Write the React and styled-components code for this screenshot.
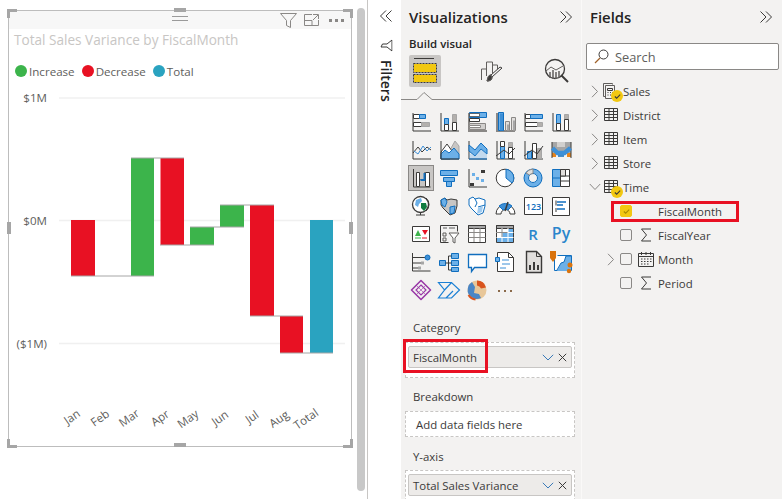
import React from 'react';
import styled, { createGlobalStyle } from 'styled-components';

const FONT = '"Open Sans", "Noto Sans", "Liberation Sans", sans-serif';
const D = '#3b3a39', B = '#106ebe', L = '#6cb0e8', G = '#a6a6a6', Y = '#f2c811', O = '#d9730d';

const Global = createGlobalStyle`
  html, body { margin: 0; padding: 0; width: 782px; height: 499px; overflow: hidden; background: #fff; }
  body { font-family: ${FONT}; }
  * { box-sizing: border-box; }
`;
const Page = styled.div`display: flex; width: 782px; height: 499px; overflow: hidden; background: #fff;`;
const Canvas = styled.div`
  width: 368px; height: 499px; flex: none; display: flex; align-items: flex-start;
  padding: 8px 0 0 8px; border-right: 1px solid #c8c6c4;
`;
const Card = styled.div`
  position: relative; width: 344px; height: 437px; margin-top: 2px; flex: none;
  border: 1px solid #bdbdbd; background: #fff; display: flex; flex-direction: column;
`;
const CardHeader = styled.div`
  height: 18px; flex: none; background: #f7f7f7; display: flex; align-items: center;
  justify-content: flex-end; gap: 7px; padding-right: 7px;
`;
const Grip = styled.div`
  position: absolute; left: 163px; top: 5px; width: 16px; height: 5px;
  border-top: 1px solid #9a9a9a; border-bottom: 1px solid #9a9a9a;
`;
const Handle = styled.div`
  position: absolute; background: ${p => p.$c || '#a6a6a6'};
  left: ${p => p.$l}px; top: ${p => p.$t}px; width: ${p => p.$w}px; height: ${p => p.$h}px;
`;
const Corner = styled.div`
  position: absolute; width: 10px; height: 9px; border: 0 solid #a6a6a6;
  ${p => p.$v}: -2px; ${p => p.$h}: -2px;
  border-${p => p.$v}-width: 3px; border-${p => p.$h}-width: 3px;
`;
const CardTitle = styled.div`
  margin-top: 1px; height: 20px; line-height: 20px; padding-left: 5px; font-size: 13.6px;
  color: #c8c6c4; white-space: nowrap; flex: none;
`;
const Legend = styled.div`
  margin-top: 13px; height: 16px; flex: none; display: flex; align-items: center; padding-left: 6px;
`;
const LegendItem = styled.div`
  display: flex; align-items: center; gap: 2px; font-size: 11.6px; color: #605e5c; margin-right: ${p => p.$mr}px;
`;
const Dot = styled.span`width: 12px; height: 12px; border-radius: 50%; background: ${p => p.$c}; flex: none;`;
const ChartSvg = styled.svg`
  margin-top: 7px; display: block; width: 342px; height: 359px; flex: none;
  font-family: ${FONT}; font-size: 11.6px; fill: #605e5c;
`;
const Scrollbar = styled.div`
  width: 8px; height: 483px; margin-left: 5px; flex: none; background: #c8c8c8; border-radius: 4px;
`;
const Rail = styled.div`
  width: 33px; flex: none; height: 499px; display: flex; flex-direction: column; align-items: center;
  padding: 9px 0 0 3px;
`;
const RailFunnel = styled.svg`margin-top: 16px; display: block; transform: rotate(90deg);`;
const RailLabel = styled.div`
  writing-mode: vertical-rl; margin-top: 8px; font-size: 14px; font-weight: 600; color: #252423; line-height: 16px;
`;
const VizPane = styled.div`
  width: 181px; flex: none; height: 499px; background: #f3f2f1; border-right: 1px solid #faf9f8;
  display: flex; flex-direction: column; overflow: hidden;
`;
const PaneHead = styled.div`
  height: 34px; flex: none; display: flex; align-items: center; justify-content: space-between;
  padding: 0 ${p => p.$pr}px 0 8px;
`;
const PaneTitle = styled.div`font-size: 14.9px; font-weight: 600; color: #252423; white-space: nowrap;`;
const BuildLabel = styled.div`
  margin-top: 2px; padding-left: 8px; height: 16px; line-height: 16px; font-size: 11.4px; font-weight: 600; color: #252423; flex: none;
`;
const TabRow = styled.div`margin-top: 3px; padding-left: 8px; display: flex; gap: 34px; flex: none;`;
const Tab = styled.div`
  width: 32px; height: 32px; display: flex; align-items: center; justify-content: center;
  border-radius: 2px; background: ${p => (p.$active ? '#c8c6c4' : 'transparent')};
`;
const Notch = styled.svg`margin-top: 5px; display: block; flex: none;`;
const VizGrid = styled.div`
  margin-top: 8px; padding-left: 6px; display: grid; grid-template-columns: repeat(6, 28px);
  grid-auto-rows: 28px; flex: none;
`;
const VizCell = styled.div`
  display: flex; align-items: center; justify-content: center; width: 28px; height: 28px;
`;
const VizIcon = styled.svg`
  width: 24px; height: 24px; display: block; overflow: visible;
  background: ${p => (p.$on ? '#c8c6c4' : 'transparent')};
  outline: ${p => (p.$on ? '1px solid #8a8886' : 'none')};
`;
const WellLabel = styled.div`
  margin-top: ${p => p.$mt}px; padding-left: 12px; height: 16px; line-height: 16px; font-size: 11.4px; color: #3b3a39; flex: none;
`;
const Well = styled.div`
  position: relative; margin: ${p => p.$mt}px 6px 0 4px; min-height: ${p => p.$h}px; border: 1px dashed #c8c6c4;
  background: #fff; padding: 3px 2px 0 2px; flex: none;
`;
const Placeholder = styled.div`font-size: 11.4px; color: #3b3a39; height: 21px; line-height: 20px; padding-left: 8px;`;
const Pill = styled.div`
  height: 22px; background: #edebe9; border: 1px solid #c8c6c4; border-radius: 2px;
  display: flex; align-items: center; padding: 0 4px 0 4px; font-size: 11.4px; color: #3b3a39;
`;
const PillText = styled.span`flex: 1; white-space: nowrap;`;
const PillIcons = styled.span`display: flex; align-items: center; gap: 4px;`;
const RedBox = styled.div`
  position: absolute; border: 3px solid #e81123; pointer-events: none;
  left: ${p => p.$l}px; top: ${p => p.$t}px; width: ${p => p.$w}px; height: ${p => p.$h}px;
`;
const FieldsPane = styled.div`
  width: 200px; flex: none; height: 499px; background: #f3f2f1; display: flex; flex-direction: column;
`;
const SearchBox = styled.div`
  margin: 9px 3px 0 4px; height: 27px; flex: none; background: #fff; border: 1px solid #8a8886; border-radius: 2px;
  display: flex; align-items: center; padding-left: 7px; gap: 6px; font-size: 12.8px; color: #605e5c;
`;
const Tree = styled.div`margin-top: 9px; display: flex; flex-direction: column;`;
const Row = styled.div`
  position: relative; height: 24px; display: flex; align-items: center; padding-left: ${p => p.$indent}px;
  font-size: 11.4px; color: #3b3a39;
`;
const ChevSlot = styled.span`width: 10px; flex: none; display: flex; justify-content: center;`;
const TableSlot = styled.span`position: relative; width: 16px; height: 16px; flex: none; margin: 0 4px 0 3px; display: block;`;
const Badge = styled.span`
  position: absolute; left: 8px; top: 7px; width: 12px; height: 12px; border-radius: 50%; background: ${Y};
  display: flex; align-items: center; justify-content: center;
`;
const CheckBoxBox = styled.span`
  width: 12px; height: 12px; flex: none; margin-left: 4px; border-radius: 2px; display: flex; align-items: center; justify-content: center;
  border: 1px solid ${p => (p.$on ? Y : '#8a8886')}; background: ${p => (p.$on ? Y : 'transparent')};
`;
const FieldIcon = styled.span`width: 16px; height: 16px; flex: none; margin: 0 4px 0 6px; display: flex; align-items: center; justify-content: center;`;
const Plain = styled.svg`display: block; flex: none;`;
const TableGlyph = styled(Plain)`margin: 1px;`;
const Dots = styled(Plain)`margin-left: 3px;`;

const DoubleChev = ({ left }) => (
  <Plain width="14" height="14" viewBox="0 0 14 14" fill="none" stroke="#3b3a39" strokeWidth="1">
    {left
      ? <path d="M7 1.5 1.5 7 7 12.5M12.5 1.5 7 7l5.5 5.5" />
      : <path d="M1.5 1.5 7 7l-5.5 5.5M7 1.5 12.5 7 7 12.5" />}
  </Plain>
);
const ChevRight = () => (
  <Plain width="8" height="13" viewBox="0 0 8 13" fill="none" stroke="#8a8886"><path d="M1 .8 6.5 6.5 1 12.2" /></Plain>
);
const ChevDown = () => (
  <Plain width="12" height="8" viewBox="0 0 12 8" fill="none" stroke="#8a8886"><path d="M.8 1 6 6.5 11.2 1" /></Plain>
);
const TableIcon = () => (
  <TableGlyph width="14" height="13" viewBox="0 0 14 13" fill="none" stroke="#3b3a39">
    <path d="M.5.5h13v12H.5zM.5 3.5h13M.5 6.5h13M.5 9.5h13M5 .5v12M9.5.5v12" />
  </TableGlyph>
);
const CalcIcon = () => (
  <Plain width="14" height="16" viewBox="0 0 14 16" fill="none" stroke="#3b3a39">
    <path d="M.5.5h9v1M2.5 2.5h9v13h-9z M.5.5v13h2" stroke="#605e5c" />
    <path d="M4.5 5.5h5v2h-5zM4.5 9.5h1M7 9.5h1M9 9.5h1M4.5 12h1M7 12h1" />
  </Plain>
);
const Tick = ({ c = '#3b3a39' }) => (
  <Plain width="7" height="5" viewBox="0 0 8 6" fill="none" stroke={c} strokeWidth="1.3"><path d="M.8 3 3 5 7.2 .8" /></Plain>
);
const Sigma = () => (
  <Plain width="12" height="14" viewBox="0 0 12 14" fill="none" stroke="#3b3a39"><path d="M11 1H1.5l5 6-5 6H11" /></Plain>
);
const Calendar = () => (
  <Plain width="16" height="15" viewBox="0 0 16 15" fill="none" stroke="#3b3a39">
    <path d="M.5 1.5h15v13H.5zM.5 4.5h15M3.5 0v3M8 0v3M12.5 0v3" />
    <path d="M3 7h1.5M6 7h1.5M9 7h1.5M12 7h1.5M3 9.5h1.5M6 9.5h1.5M9 9.5h1.5M12 9.5h1.5M3 12h1.5M6 12h1.5M9 12h1.5" />
  </Plain>
);
const PillControls = () => (
  <PillIcons>
    <Plain width="12" height="7" viewBox="0 0 12 7" fill="none" stroke="#3a7ab8"><path d="M.8.8 6 6 11.2.8" /></Plain>
    <Plain width="9" height="9" viewBox="0 0 9 9" fill="none" stroke="#3b3a39"><path d="m.8.8 7.400 7.400M8.200.8.8 8.200" /></Plain>
  </PillIcons>
);

/* Visual-type gallery: each drawing on a 24x24 field */
const axis = <path d="M4 3v18h18" stroke={D} />;
const thickAxis = <path d="M4 3v18h18" stroke="#8a8886" strokeWidth="2" />;
const icons = [
  <>{axis}<path d="M4.500 4.500h6v4h-6z" stroke={D} fill="#fff" /><path d="M10.500 4.500h6v4h-6z" fill={L} stroke={B} /><path d="M4.500 12.500h8v4h-8z" stroke={D} fill="#fff" /><path d="M12.500 12.500h8v4h-8z" fill="#b3b0ad" stroke={G} /></>,
  <>{axis}<path d="M7.500 8.500h4v6h-4z" fill={L} stroke={B} /><path d="M7.500 14.500h4v6h-4z" stroke={D} fill="#fff" /><path d="M15.500 4.500h4v8h-4z" fill="#b3b0ad" stroke={G} /><path d="M15.500 12.500h4v8h-4z" stroke={D} fill="#fff" /></>,
  <>{thickAxis}<path d="M4.500 2.500h17v5h-17z" fill={L} stroke={B} /><path d="M4.500 3.500h10v3h-10z" fill="#fff" stroke={D} strokeOpacity=".7" /><path d="M4.500 8.500h10v3h-10z" fill="#fff" stroke={D} /><path d="M4.500 13.500h16v6h-16z" fill="#d2d0ce" stroke="#8a8886" /><path d="M4.500 15.500h11v2h-11z" fill="#fff" stroke="#8a8886" /></>,
  <>{thickAxis}<path d="M5.500 2.500h5v18h-5z" fill={L} stroke={B} /><path d="M7 3.500h3v17h-3z" fill="#3d8fd6" /><path d="M12.500 11.500h4v9h-4zM18.500 7.500h4v13h-4z" fill="#e1dfdd" stroke="#8a8886" /><path d="M14 14.500h2v6h-2zM20 10.500h2v10h-2z" fill={G} /></>,
  <>{axis}<path d="M4.500 4.500h5v4h-5z" stroke={D} fill="#fff" /><path d="M9.500 4.500h12v4h-12z" fill={L} stroke={B} /><path d="M4.500 12.500h12v4h-12z" stroke={D} fill="#fff" /><path d="M16.500 12.500h5v4h-5z" fill="#b3b0ad" stroke={G} /></>,
  <>{axis}<path d="M7.500 4.500h4v9h-4z" fill={L} stroke={B} /><path d="M7.500 13.500h4v7h-4z" stroke={D} fill="#fff" /><path d="M15.500 4.500h4v5h-4z" fill="#b3b0ad" stroke={G} /><path d="M15.500 9.500h4v11h-4z" stroke={D} fill="#fff" /></>,
  <>{axis}<path d="M4 15l5-6 4 5 5-5 4 3" stroke={D} /><path d="M5 13l4 3 5-8 4 5 4-4" stroke="#3d8fd6" /></>,
  <><path d="M13 12l5-9 4 5v13h-9z" fill="#c8c6c4" stroke={G} /><path d="M4 14l6-8 5 7-2 8H4z" fill="#fff" stroke={D} /><path d="M4 21v-5l4-4 4 3 5-5 5 6v5z" fill={L} stroke={B} />{axis}</>,
  <>{axis}<path d="M4 7l6 5 6-7 6 6v5l-6-5-6 7-6-5z" fill={L} stroke={B} /><path d="M4 15v6h18v-5l-6-5-6 7z" fill={L} fillOpacity=".35" /><path d="M4 21h18" stroke={B} /></>,
  <>{axis}<path d="M7.500 8.500h4v12h-4z" fill={L} stroke={B} /><path d="M7.500 3.500h4v5h-4z" fill="#fff" stroke={D} /><path d="M15.500 4.500h4v5h-4z" fill="#b3b0ad" stroke={G} /><path d="M15.500 9.500h4v11h-4z" fill="#fff" stroke={D} /><path d="M3 18l8-6 5 4 6-6" stroke={D} /></>,
  <>{axis}<path d="M6.500 13.500h4v7h-4z" fill={L} stroke={B} /><path d="M11.500 5.500h4v15h-4z" fill="#fff" stroke={D} /><path d="M16.500 10.500h4v10h-4z" fill="#b3b0ad" stroke={G} /><path d="M3 18l8-6 5 4 6-8" stroke={D} /></>,
  <><path d="M3 4h19v12H3z" fill="#a6a6a6" /><path d="M8 4h8v5H8z" fill="#d2d0ce" /><path d="M3 15h4v4H3zM18 15h4v4h-4z" fill="#e8841a" /><path d="M3 4v16M22 4v16" stroke={D} /><path d="M3.500 10l5 5 7 0 6-5" stroke="#3d8fd6" strokeWidth="4.500" /><path d="M9 18h6" stroke={B} strokeWidth="1.500" /></>,
  <><path d="M4.500 3v18h17" stroke={D} /><path d="M7.500 6.500h3v14h-3zM16.500 6.500h4v14h-4z" fill="#fff" stroke={D} /><path d="M11.500 13.500h4v-7h0" stroke={D} /><path d="M11.500 14h4V7" fill="none" stroke={B} strokeWidth="2" /></>,
  <><path d="M3.500 4.500h17v5h-17z" fill={L} stroke={B} /><path d="M6.500 11.500h11v4h-11z" fill={L} stroke={B} /><path d="M9.500 15.500h5v5h-5z" fill={L} stroke={B} /></>,
  <>{axis}<path d="M16 4h4v3h-4zM5 17h4v3H5z" fill={D} /><path d="M7 7h3v3H7zM11 11h3v3h-3zM16 13h3v3h-3z" fill={L} /></>,
  <><circle cx="12" cy="12" r="8.800" fill="#fff" stroke={D} /><path d="M13 3.200a8.800 8.800 0 0 1 7.800 8.800c0 2-.5 3.500-1.800 5L13 12z" fill={L} stroke={B} /></>,
  <><circle cx="12" cy="12" r="6.800" fill="none" stroke={L} strokeWidth="4.500" /><circle cx="12" cy="12" r="9" fill="none" stroke={B} /><circle cx="12" cy="12" r="4.500" fill="#f3f2f1" stroke={B} /><path d="M5 7a9 9 0 0 1 7-4v4.500A4.500 4.500 0 0 0 8.500 9z" fill="#e1dfdd" stroke="#8a8886" /></>,
  <><path d="M3.500 3.500h8v17h-8z" fill={L} stroke={B} /><path d="M3.500 12h8" stroke={B} /><path d="M11.500 3.500h9v17h-9z" fill="#fff" stroke={D} /><path d="M11.500 10h9M11.500 15h9M16 3.500V10" stroke={D} /><path d="M11.500 3.500h5V10h-5z" fill="#e1dfdd" stroke={D} /></>,
  <><circle cx="11.500" cy="10.500" r="8" fill="#fff" stroke={D} strokeWidth="1.300" /><path d="M7 6l5-2 1 3-3 3-1 3-3-2z" fill="#6cb0e8" /><path d="M12 9h5l1 4-3 4-3-3z" fill="#107c41" /><path d="M17 4a8.500 8.500 0 0 1 0 13M7 21h9M11.500 19v2" stroke={D} /></>,
  <><path d="M4 6l4-2 2 2 4-1 6 1v6l-2 7-5 2-4-4-3-3-2-3z" fill="#c8c6c4" stroke={D} /><path d="M4 6l4-2 2 4-2 5-3-2z" fill={L} stroke={B} /><path d="M13 13l5-1-1 7-4 1z" fill={L} stroke={B} /></>,
  <><path d="M4 5l4-2 2 2 4-1 6 2v6l-2 7-5 2-4-4-3-3-2-3z" fill="#fff" stroke={B} /><path d="M10 5l2 4-2 4M13 13l7-2" stroke={B} /><path d="M12 20l1-6 5-2-1 6z" fill="#9fcbf0" /></>,
  <><path d="M3 20a9.500 9.500 0 0 1 19 0h-5a4.500 4.500 0 0 0-9 0z" fill="#fff" stroke={D} /><path d="M6 12a9.500 9.500 0 0 1 13 0l-4 4a4.500 4.500 0 0 0-5 0z" fill="#3d8fd6" stroke={B} /><path d="M12 17l3-9" stroke={D} strokeWidth="1.500" /></>,
  <><path d="M3.500 3.500h18v17h-18z" fill="#fff" stroke={D} /><text x="12.500" y="16" textAnchor="middle" fontSize="9" fontWeight="600" fill={B} fontFamily={FONT}>123</text></>,
  <><path d="M3.500 3.500h17v18h-17z" fill="#fff" stroke={D} /><path d="M7 6.500v5M7 14v4" stroke={D} /><path d="M8 8h9M8 11h6" stroke={B} strokeWidth="1.500" /><path d="M8 15h8" stroke={B} strokeWidth="1.500" /></>,
  <><path d="M3.500 4.500h17v15h-17z" fill="#fff" stroke={D} /><path d="M13 8h6l-3 5z" fill="#e81123" /><path d="M9 8l3 6H6z" fill="#3cb44b" /><path d="M6 16h6" stroke="#3cb44b" /><path d="M13 16h5" stroke="#e81123" /></>,
  <><path d="M3.500 3.500h17v6M3.500 3.500v17h8" stroke={D} /><path d="M6 6h4M12 6h6" stroke={G} strokeWidth="2" /><path d="M6 11h3v3H6zM6 16h3v3H6z" fill="none" stroke="#605e5c" /><path d="M12 11h10l-4 5v5l-2-1v-4z" fill="#fff" stroke="#605e5c" /></>,
  <><path d="M3.500 3.500h17v17h-17z" fill="#fff" stroke={D} /><path d="M3.500 3.500h17v3h-17z" fill={G} stroke={D} /><path d="M3.500 10.500h17M3.500 15.500h17M9 6v14M15 6v14" stroke="#8a8886" /></>,
  <><path d="M3.500 3.500h17v17h-17z" fill="#fff" stroke={D} /><path d="M3.500 3.500h17v3h-17z" fill={G} stroke={D} /><path d="M15 7h5v13h-5zM9 11h6v4H9zM4 16h5v4H4zM9 16h6v4H9z" fill={L} /><path d="M3.500 10.500h17M3.500 15.500h17M9 6v14M15 6v14" stroke="#fff" /><path d="M3.500 10.500h11M9 6v9" stroke="#8a8886" /></>,
  <text x="12" y="18" textAnchor="middle" fontSize="15" fontWeight="600" fill="#2a86cc" fontFamily={FONT}>R</text>,
  <text x="12" y="17" textAnchor="middle" fontSize="16" fontWeight="600" fill="#2a86cc" fontFamily={FONT}>Py</text>,
  <><path d="M3.500 3v18h18M3.500 7.500h14M3.500 13h9M3.500 18h6" stroke={D} /><circle cx="18.500" cy="7.500" r="2.500" fill="#3d8fd6" stroke={B} /><path d="M12 11.500h3v3h-3zM9 16.500h3v3H9z" fill={G} /></>,
  <><path d="M2.500 10.500h6v5h-6z" fill={L} stroke={B} /><path d="M14.500 3.500h7v5h-7zM14.500 10.500h7v5h-7zM14.500 17.500h7v4h-7z" fill={L} stroke={B} /><path d="M8.500 13h3M11.500 6v14M11.500 6h3M11.500 13h3M11.500 20h3" stroke={D} /></>,
  <path d="M3.500 4.500h18v13h-12l-3 4v-4h-3z" fill="#fff" stroke={B} strokeWidth="1.300" />,
  <><path d="M4.500 2.500h11l5 5v14h-16z" fill="#fff" stroke={D} /><path d="M15.500 2.500v5h5" stroke={D} /><path d="M2.500 7.500h4v4h-4z" fill={L} stroke={B} /><path d="M9 10h7M9 14h8M7 18h6" stroke="#3d8fd6" /></>,
  <><path d="M5.500 1.500h10l5 5v16h-15z" fill="#e1dfdd" stroke={D} strokeWidth="1.400" /><path d="M15.500 1.500v5h5" stroke={D} /><path d="M8 15h2v5H8zM12 12h2v8h-2zM16 15h2v5h-2z" fill={D} /></>,
  <><path d="M8.500 5.500h14v15h-17V9" fill="#fff" stroke={B} /><path d="M8 21l4-8 3-1 2-6h5v15z" fill={L} /><path d="M8 20l4-7 3-1 2-6h5" stroke={B} /><path d="M1 1h6v7l-3 4-3-4z" fill={O} /><circle cx="21" cy="15" r="2.500" fill={O} /><circle cx="20" cy="21" r="2.200" fill={O} /></>,
  <><path d="M12 2.500 21.500 12 12 21.500 2.500 12z" fill="none" stroke="#9a3aa8" strokeWidth="1.600" strokeLinejoin="round" /><path d="M12 7l5 5-5 5-5-5z" fill="none" stroke="#9a3aa8" strokeWidth="1.200" /><path d="M7 7l10 10M17 7 7 17" stroke="#9a3aa8" strokeOpacity=".6" /></>,
  <path d="M1.500 4.500h13l8 7.500-8 8h-13l6-8zM7.500 12l7-7.500M9 20l7-7" fill="none" stroke="#1a7fd4" strokeWidth="1.200" />,
  <><circle cx="12" cy="12" r="9.500" fill="#e8c799" /><path d="M12 2.500a9.500 9.500 0 0 1 9 7l-5 1a5 5 0 0 0-4-3z" fill="#d9541e" /><path d="M4 17a9.500 9.500 0 0 1 3-13l3 5-1 6 5 1 2 4a9.500 9.500 0 0 1-12-3z" fill="#4a86c5" /><path d="M3.500 17a9.500 9.500 0 0 0 7 4.500" stroke="#d9541e" strokeWidth="2" /></>,
  <path d="M5 12h2v2H5zM11 12h2v2h-2zM17 12h2v2h-2z" fill="#8a6a4a" />,
];
const vizRows = icons.map((g, i) => (
  <VizCell key={i}><VizIcon $on={i === 12} viewBox="0 0 24 24" fill="none">{g}</VizIcon></VizCell>
));

const gridY = [98, 220.5, 343.5];
const bars = [
  [71, 220, 24, 56, '#e81123'],
  [131, 158, 23, 118, '#3cb44b'],
  [160.5, 158, 23.5, 87, '#e81123'],
  [190, 227, 24, 18, '#3cb44b'],
  [220, 205, 24, 22, '#3cb44b'],
  [250, 205, 24, 111, '#e81123'],
  [280, 316, 23, 37, '#e81123'],
  [310, 220, 23, 133, '#2aa3c0'],
];
const links = [[71, 154, 276], [131, 184, 158], [160, 214, 245], [190, 244, 227], [220, 274, 205], [250, 303, 316], [280, 333, 353]];
const months = [['Jan', 72, 417], ['Feb', 100, 418], ['Mar', 129, 418], ['Apr', 160, 418], ['May', 188, 419], ['Jun', 220, 418], ['Jul', 252, 417], ['Aug', 279, 419], ['Total', 306, 419]];

const Chart = () => (
  <ChartSvg viewBox="9 86 342 359">
    {gridY.map(y => <line key={y} x1="59" x2="345" y1={y} y2={y} stroke="#f0f0f0" strokeWidth="1.5" />)}
    <text x="47" y="102" textAnchor="end">$1M</text>
    <text x="47" y="224.5" textAnchor="end">$0M</text>
    <text x="47" y="347.5" textAnchor="end">($1M)</text>
    {bars.map(([x, y, w, h, c]) => <rect key={x} x={x} y={y} width={w} height={h} fill={c} />)}
    {links.map(([a, b, y]) => <line key={a} x1={a} x2={b} y1={y} y2={y} stroke="#a6a6a6" />)}
    {months.map(([t, x, y]) => (
      <text key={t} x={x} y={y + 4} textAnchor="middle" transform={`rotate(-35 ${x} ${y})`}>{t}</text>
    ))}
  </ChartSvg>
);

const Field = ({ indent = 24, chev, on, icon, children, mark }) => (
  <Row $indent={indent}>
    <ChevSlot>{chev && <ChevRight />}</ChevSlot>
    <CheckBoxBox $on={on}>{on && <Tick c="#a68a00" />}</CheckBoxBox>
    <FieldIcon>{icon}</FieldIcon>
    {children}
    {mark && <RedBox $l={29} $t={2} $w={128} $h={21} />}
  </Row>
);
const TableRow = ({ icon, open, badge, children }) => (
  <Row $indent={8}>
    <ChevSlot>{open ? <ChevDown /> : <ChevRight />}</ChevSlot>
    <TableSlot>
      {icon}
      {badge && <Badge><Tick /></Badge>}
    </TableSlot>
    {children}
  </Row>
);

export default function App() {
  return (
    <Page>
      <Global />
      <Canvas>
        <Card>
          <CardHeader>
            <Plain width="17" height="15" viewBox="0 0 17 15" fill="none" stroke="#8a8886"><path d="M.5.500h16l-6 7v7l-4-2v-5z" /></Plain>
            <Plain width="15" height="12" viewBox="0 0 15 12" fill="none" stroke="#8a8886"><path d="M8 .5H.5v11h14V6M.5 6.500H8v5M9 .5h5.500V5M14 1 9 6" /></Plain>
            <Dots width="15" height="3" viewBox="0 0 15 3" fill="#8a8886"><path d="M0 0h3v3H0zM6 0h3v3H6zM12 0h3v3h-3z" /></Dots>
          </CardHeader>
          <Grip />
          <Handle $l={165} $t={-3} $w={12} $h={4} />
          <Handle $l={165} $t={432} $w={12} $h={4} />
          <Handle $l={-2} $t={211} $w={4} $h={12} />
          <Handle $l={340} $t={211} $w={4} $h={12} />
          <Corner $v="top" $h="left" />
          <Corner $v="top" $h="right" />
          <Corner $v="bottom" $h="left" />
          <Corner $v="bottom" $h="right" />
          <CardTitle>Total Sales Variance by FiscalMonth</CardTitle>
          <Legend>
            <LegendItem $mr={7}><Dot $c="#3cb44b" />Increase</LegendItem>
            <LegendItem $mr={7}><Dot $c="#e81123" />Decrease</LegendItem>
            <LegendItem $mr={0}><Dot $c="#2aa3c0" />Total</LegendItem>
          </Legend>
          <Chart />
        </Card>
        <Scrollbar />
      </Canvas>
      <Rail>
        <DoubleChev left />
        <RailFunnel width="12" height="13" viewBox="0 0 12 13" fill="none" stroke="#3b3a39"><path d="M.5.500h11l-4 5v6l-3-1.500V5.500z" /></RailFunnel>
        <RailLabel>Filters</RailLabel>
      </Rail>
      <VizPane>
        <PaneHead $pr={8}><PaneTitle>Visualizations</PaneTitle><DoubleChev /></PaneHead>
        <BuildLabel>Build visual</BuildLabel>
        <TabRow>
          <Tab $active>
            <Plain width="26" height="28" viewBox="0 0 26 28" fill="none">
              <path d="M2 1.500h20" stroke={D} />
              <path d="M2 7h22v8H2zM2 18h22v7H2z" fill={Y} />
              <path d="M1.500 6.500h23v9h-23zM1.500 17.500h23v8h-23z" stroke={D} strokeDasharray="2 1" />
            </Plain>
          </Tab>
          <Tab>
            <Plain width="24" height="24" viewBox="0 0 24 24" fill="none" stroke="#605e5c">
              <path d="M2.500 21V10h5V3h6v11M7.500 10v7M13.500 6h5v4" />
              <path d="M8 22c3 0 5-1 5-4l10-9-2-1-9 8c-3 0-3 3-4 6z" fill="#f3f2f1" stroke={D} />
              <path d="M8 22c3 0 5-1 5-4l-1-2c-3 0-3 3-4 6z" fill={D} />
            </Plain>
          </Tab>
          <Tab>
            <Plain width="26" height="26" viewBox="0 0 26 26" fill="none" stroke={D}>
              <circle cx="11" cy="11" r="9.500" strokeWidth="1.300" />
              <path d="M2 13l5-4 5 3 7-4" stroke="#605e5c" />
              <path d="M6 14v6M9 12v9M12 14v7M15 13v7" stroke="#605e5c" strokeWidth="1.500" />
              <path d="M17 17l7 7" strokeWidth="2" />
            </Plain>
          </Tab>
        </TabRow>
        <Notch width="180" height="8" viewBox="0 0 180 8" fill="none" stroke="#8a8886"><path d="M0 7.500h16l7-7 8 7h149" /></Notch>
        <VizGrid>{vizRows}</VizGrid>
        <WellLabel $mt={16}>Category</WellLabel>
        <Well $mt={6} $h={36}>
          <Pill><PillText>FiscalMonth</PillText><PillControls /></Pill>
          <RedBox $l={-3} $t={-4} $w={85} $h={34} />
        </Well>
        <WellLabel $mt={11}>Breakdown</WellLabel>
        <Well $mt={6} $h={26}><Placeholder>Add data fields here</Placeholder></Well>
        <WellLabel $mt={12}>Y-axis</WellLabel>
        <Well $mt={5} $h={36}>
          <Pill><PillText>Total Sales Variance</PillText><PillControls /></Pill>
        </Well>
      </VizPane>
      <FieldsPane>
        <PaneHead $pr={9}><PaneTitle>Fields</PaneTitle><DoubleChev /></PaneHead>
        <SearchBox>
          <Plain width="15" height="15" viewBox="0 0 15 15" fill="none" stroke="#3b3a39"><circle cx="9.500" cy="5.500" r="4.500" /><path d="M6 9 1 14" stroke="#a0622a" strokeWidth="1.200" /></Plain>
          Search
        </SearchBox>
        <Tree>
          <TableRow icon={<CalcIcon />} badge>Sales</TableRow>
          <TableRow icon={<TableIcon />}>District</TableRow>
          <TableRow icon={<TableIcon />}>Item</TableRow>
          <TableRow icon={<TableIcon />}>Store</TableRow>
          <TableRow icon={<TableIcon />} open badge>Time</TableRow>
          <Field on mark>FiscalMonth</Field>
          <Field icon={<Sigma />}>FiscalYear</Field>
          <Field chev icon={<Calendar />}>Month</Field>
          <Field icon={<Sigma />}>Period</Field>
        </Tree>
      </FieldsPane>
    </Page>
  );
}
